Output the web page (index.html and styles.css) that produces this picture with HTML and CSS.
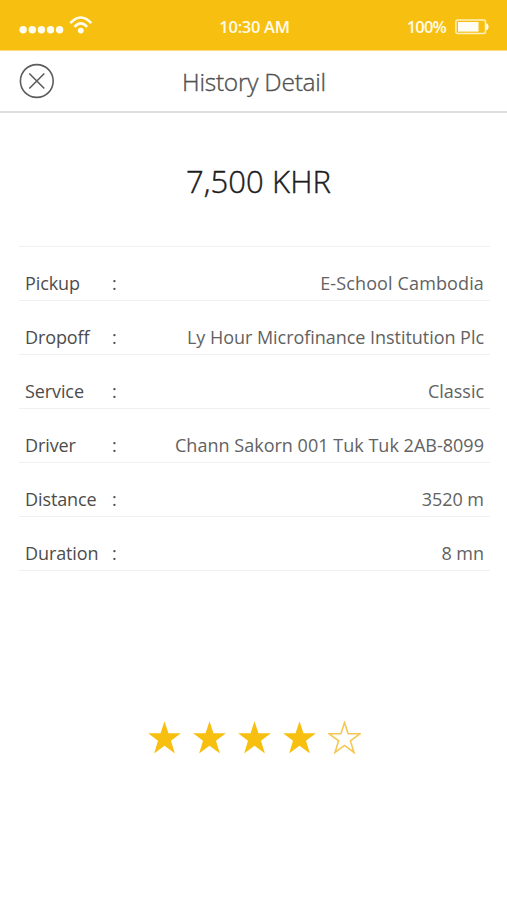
FILE: index.html
```html
<!DOCTYPE html>
<html lang="en">
<head>
<meta charset="utf-8">
<title>History Detail</title>
<link rel="stylesheet" href="styles.css">
</head>
<body>
<div class="status">
  <div class="signal">
    <svg width="74" height="20" viewBox="0 0 74 20" fill="#fffdf2">
      <circle cx="4.1" cy="14.8" r="3.7"/><circle cx="13.3" cy="14.8" r="3.7"/><circle cx="22.4" cy="14.8" r="3.7"/><circle cx="31.5" cy="14.8" r="3.7"/><circle cx="40.6" cy="14.8" r="3.7"/>
      <circle cx="61.8" cy="15.6" r="2.9"/>
      <path d="M51.3 8.2Q61.8-3.2 72.3 8.2M55.5 11.8Q61.8 5 68.1 11.8" fill="none" stroke="#fffdf2" stroke-width="2.6"/>
    </svg>
  </div>
  <div class="time">10:30 AM</div>
  <div class="power">
    <span class="percent">100%</span>
    <svg width="34" height="16" viewBox="0 0 34 16">
      <rect x="0.9" y="1" width="29.6" height="13.6" rx="2" fill="none" stroke="#fff0bd" stroke-width="1.5"/>
      <rect x="3" y="3" width="20.5" height="9.6" fill="#fffdf5"/>
      <path d="M31.2 4.5h1q1.4 1.3 1.4 3.3t-1.4 3.3h-1z" fill="#fffdf2"/>
    </svg>
  </div>
</div>
<header class="bar">
  <svg class="close" width="36" height="36" viewBox="0 0 36 36" fill="none" stroke="#5c5c5c" stroke-width="1.6">
    <circle cx="17.8" cy="18" r="16.4"/><path d="M10.3 10.5l15 15M25.3 10.5l-15 15"/>
  </svg>
  <h1 class="title">History Detail</h1>
</header>
<main>
  <div class="price">7,500 KHR</div>
  <div class="rows">
    <div class="row"><span class="label">Pickup</span><span class="colon">:</span><span class="value place">E-School Cambodia</span></div>
    <div class="row"><span class="label">Dropoff</span><span class="colon">:</span><span class="value">Ly Hour Microfinance Institution Plc</span></div>
    <div class="row"><span class="label">Service</span><span class="colon">:</span><span class="value">Classic</span></div>
    <div class="row"><span class="label">Driver</span><span class="colon">:</span><span class="value driver">Chann Sakorn 001 Tuk Tuk 2AB-8099</span></div>
    <div class="row"><span class="label">Distance</span><span class="colon">:</span><span class="value">3520 m</span></div>
    <div class="row"><span class="label">Duration</span><span class="colon">:</span><span class="value">8 mn</span></div>
  </div>
  <div class="stars">
    <svg class="star" viewBox="0 0 33 33"><path d="M16.5 .2l4 12h12.4l-9.9 7.6 3.9 12.6-10.4-7.6-10.4 7.6 3.9-12.6L.1 12.2h12.4z"/></svg>
    <svg class="star" viewBox="0 0 33 33"><path d="M16.5 .2l4 12h12.4l-9.9 7.6 3.9 12.6-10.4-7.6-10.4 7.6 3.9-12.6L.1 12.2h12.4z"/></svg>
    <svg class="star" viewBox="0 0 33 33"><path d="M16.5 .2l4 12h12.4l-9.9 7.6 3.9 12.6-10.4-7.6-10.4 7.6 3.9-12.6L.1 12.2h12.4z"/></svg>
    <svg class="star" viewBox="0 0 33 33"><path d="M16.5 .2l4 12h12.4l-9.9 7.6 3.9 12.6-10.4-7.6-10.4 7.6 3.9-12.6L.1 12.2h12.4z"/></svg>
    <svg class="star empty" viewBox="0 0 33 33"><path d="M16.5 1.6l3.6 11.2h11.8l-9.5 7.1 3.6 11.6-9.5-7.1-9.5 7.1 3.6-11.6-9.5-7.1h11.8z"/></svg>
  </div>
</main>
</body>
</html>
```
FILE: styles.css
```css
* { box-sizing: border-box; }
body {
  margin: 0;
  width: 507px;
  height: 900px;
  overflow: hidden;
  background: #fff;
  color: #4c4c4c;
  font-family: "Open Sans", "Noto Sans", sans-serif;
}
svg { display: block; }
.status {
  display: grid;
  grid-template-columns: 1fr auto 1fr;
  height: 51px;
  padding: 15px 18px 0 19px;
  background: #f7c010;
  border-bottom: 1px solid #fadd80;
  color: #fffbe8;
  font-size: 16.5px;
  line-height: 24px;
  font-weight: 600;
}
.time { padding-left: 1px; letter-spacing: -0.3px; }
.power { display: flex; justify-content: flex-end; gap: 9px; }
.power svg { margin-top: 4px; }
.percent { letter-spacing: -0.8px; }
.bar {
  display: grid;
  grid-template-columns: 36px 1fr 36px;
  align-items: center;
  height: 62px;
  padding: 0 18px 1px 19px;
  border-bottom: 2px solid #dedede;
}
.title {
  margin: 3px 0 0;
  text-align: center;
  font-size: 24.5px;
  line-height: 34px;
  font-weight: 300;
  color: #505050;
  -webkit-text-stroke: 0.35px #505050;
  letter-spacing: -0.25px;
}
.price {
  height: 133px;
  padding: 47px 0 0 10px;
  text-align: center;
  font-size: 31px;
  line-height: 42px;
  font-weight: 300;
  color: #1c1c1c;
  -webkit-text-stroke: 0.4px #1c1c1c;
  letter-spacing: 0.1px;
}
.rows {
  margin: 0 17px 0 19px;
  border-top: 1px solid #f0f0f0;
}
.row {
  display: grid;
  grid-template-columns: 87px 10px 1fr;
  height: 54px;
  padding: 22px 6px 0 6px;
  border-bottom: 1px solid #f0f0f0;
  font-size: 18px;
  line-height: 28px;
  letter-spacing: -0.1px;
  white-space: nowrap;
}
.value { text-align: right; color: #626262; letter-spacing: -0.04px; }
.place { letter-spacing: 0.13px; }
.driver { letter-spacing: 0.02px; }
.stars {
  display: flex;
  justify-content: center;
  gap: 12.2px;
  margin-top: 150px;
  padding-left: 2px;
}
.star { width: 33px; height: 33px; fill: #f7c010; }
.empty { fill: none; stroke: #f5c652; stroke-width: 1.6; }
```
